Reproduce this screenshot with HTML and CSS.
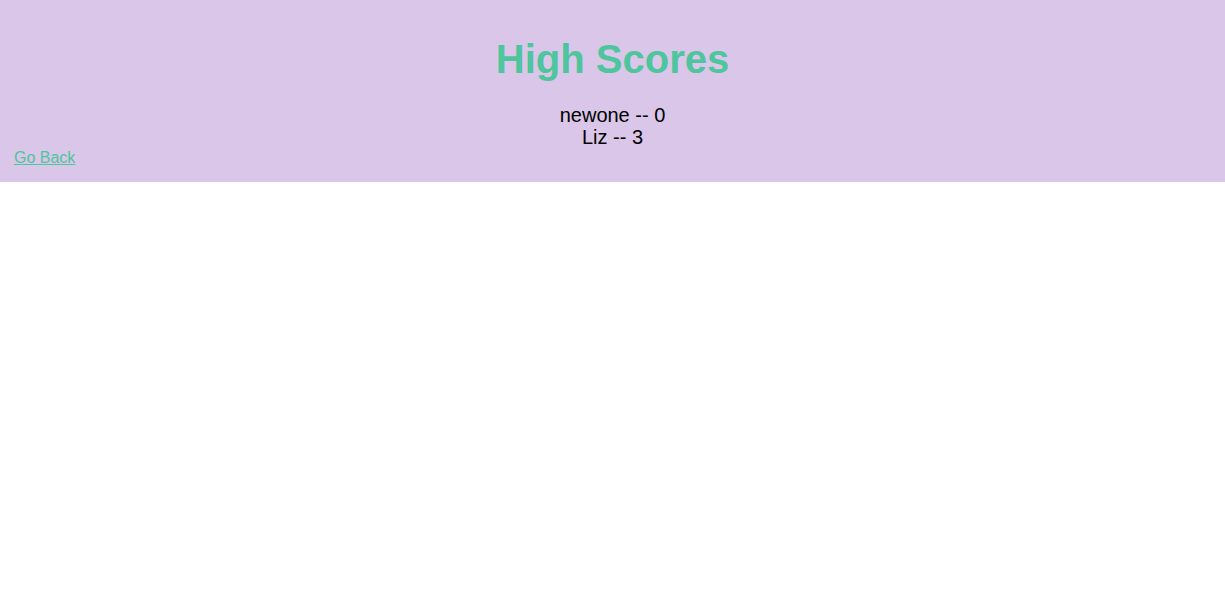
FILE: index.html
```html
<!DOCTYPE html>
<html lang="en">
<head>
<meta charset="utf-8">
<title>High Scores</title>
<link rel="stylesheet" href="styles.css">
</head>
<body>
<header class="scores">
  <h1 class="scores__title">High Scores</h1>
  <ul class="scores__list">
    <li>newone -- 0</li>
    <li>Liz -- 3</li>
  </ul>
  <a class="scores__back" href="#">Go Back</a>
</header>
</body>
</html>
```
FILE: styles.css
```css
html, body {
  margin: 0;
  padding: 0;
  background: #ffffff;
  font-family: "Liberation Sans", Arial, Helvetica, sans-serif;
}

.scores {
  background: #d9c6e8;
  padding: 36px 14px 15px;
  display: flex;
  flex-direction: column;
}

.scores__title {
  margin: 0 0 22px;
  text-align: center;
  font-size: 40px;
  font-weight: 700;
  line-height: 46px;
  color: #4ec59d;
}

.scores__list {
  list-style: none;
  margin: 0;
  padding: 0;
  text-align: center;
  font-size: 20px;
  line-height: 22px;
  color: #000000;
}

.scores__back {
  align-self: flex-start;
  margin-top: 1px;
  font-size: 16px;
  line-height: 18px;
  color: #4ec59d;
  text-decoration: underline;
}
```
